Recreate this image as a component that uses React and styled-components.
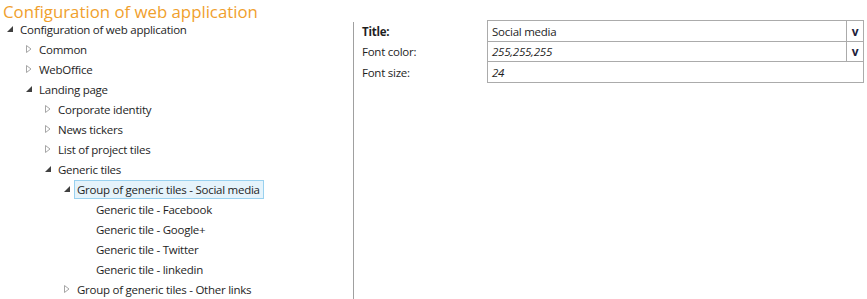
import styled, { createGlobalStyle } from 'styled-components';

const GlobalStyle = createGlobalStyle`
  html, body {
    margin: 0;
    padding: 0;
    background: #ffffff;
  }
  body {
    font-family: 'Open Sans', 'Noto Sans', sans-serif;
    font-size: 11.5px;
    letter-spacing: -0.25px;
    color: #1e1e1e;
  }
`;

const Page = styled.div`
  width: 867px;
  height: 299px;
  overflow: hidden;
  display: flex;
  flex-direction: column;
`;

const Heading = styled.h1`
  margin: 0 0 -1px;
  padding: 3px 0 0 3px;
  line-height: 17px;
  font-size: 16.8px;
  letter-spacing: 0;
  font-weight: 400;
  color: #f0a02d;
  white-space: nowrap;
`;

const Body = styled.div`
  flex: 1;
  display: flex;
`;

const TreePane = styled.div`
  width: 353px;
  display: flex;
  flex-direction: column;
`;

const Divider = styled.div`
  width: 1px;
  margin-top: 3px;
  background: #a0a0a0;
`;

const Row = styled.div`
  height: 20px;
  display: flex;
  align-items: center;
  padding-left: ${(p) => 4 + p.$level * 19}px;
  white-space: nowrap;
`;

const Toggle = styled.span`
  width: 12px;
  height: 12px;
  margin-right: 4px;
  display: flex;
  align-items: center;
  justify-content: center;
  flex-shrink: 0;
`;

const Label = styled.span`
  padding: 0 3px 0 2px;
  line-height: 17px;
  border: 1px solid ${(p) => (p.$selected ? '#99d1ef' : 'transparent')};
  background: ${(p) => (p.$selected ? '#e5f3fb' : 'transparent')};
  margin-left: -3px;
`;

const PropsPane = styled.div`
  flex: 1;
  padding: 1px 3px 0 8px;
`;

const PropRow = styled.div`
  display: grid;
  grid-template-columns: 125px 1fr;
  height: 21px;
  align-items: center;
`;

const PropName = styled.span`
  font-weight: ${(p) => (p.$bold ? 700 : 400)};
`;

const PropValue = styled.div`
  display: flex;
  border: 1px solid #ababab;
  border-top: ${(p) => (p.$first ? '1px solid #ababab' : 'none')};
  box-sizing: border-box;
  height: ${(p) => (p.$first ? 22 : 21)}px;
`;

const ValueText = styled.span`
  flex: 1;
  padding-left: 4px;
  display: flex;
  align-items: center;
  font-style: ${(p) => (p.$italic ? 'italic' : 'normal')};
`;

const DropButton = styled.span`
  width: 16px;
  border-left: 1px solid #ababab;
  display: flex;
  align-items: center;
  justify-content: center;
  font-weight: 700;
  font-size: 12px;
  color: #1e1e3c;
`;

const Collapsed = () => (
  <svg width="8" height="10" viewBox="0 0 8 10">
    <path d="M1.5 1.5 L6 5 L1.5 8.5 Z" fill="none" stroke="#a6a6a6" strokeWidth="1" />
  </svg>
);

const Expanded = () => (
  <svg width="8" height="8" viewBox="0 0 8 8">
    <path d="M7 1 L7 7 L1 7 Z" fill="#404040" />
  </svg>
);

const tree = [
  { level: 0, text: 'Configuration of web application', state: 'open' },
  { level: 1, text: 'Common', state: 'closed' },
  { level: 1, text: 'WebOffice', state: 'closed' },
  { level: 1, text: 'Landing page', state: 'open' },
  { level: 2, text: 'Corporate identity', state: 'closed' },
  { level: 2, text: 'News tickers', state: 'closed' },
  { level: 2, text: 'List of project tiles', state: 'closed' },
  { level: 2, text: 'Generic tiles', state: 'open' },
  { level: 3, text: 'Group of generic tiles - Social media', state: 'open', selected: true },
  { level: 4, text: 'Generic tile - Facebook' },
  { level: 4, text: 'Generic tile - Google+' },
  { level: 4, text: 'Generic tile - Twitter' },
  { level: 4, text: 'Generic tile - linkedin' },
  { level: 3, text: 'Group of generic tiles - Other links', state: 'closed' },
];

const properties = [
  { name: 'Title:', value: 'Social media', bold: true, drop: true },
  { name: 'Font color:', value: '255,255,255', italic: true, drop: true },
  { name: 'Font size:', value: '24', italic: true },
];

export default function App() {
  return (
    <Page>
      <GlobalStyle />
      <Heading>Configuration of web application</Heading>
      <Body>
        <TreePane>
          {tree.map((node, i) => (
            <Row key={i} $level={node.level}>
              <Toggle>
                {node.state === 'open' && <Expanded />}
                {node.state === 'closed' && <Collapsed />}
              </Toggle>
              <Label $selected={node.selected}>{node.text}</Label>
            </Row>
          ))}
        </TreePane>
        <Divider />
        <PropsPane>
          {properties.map((prop, i) => (
            <PropRow key={prop.name}>
              <PropName $bold={prop.bold}>{prop.name}</PropName>
              <PropValue $first={i === 0}>
                <ValueText $italic={prop.italic}>{prop.value}</ValueText>
                {prop.drop && <DropButton>v</DropButton>}
              </PropValue>
            </PropRow>
          ))}
        </PropsPane>
      </Body>
    </Page>
  );
}
